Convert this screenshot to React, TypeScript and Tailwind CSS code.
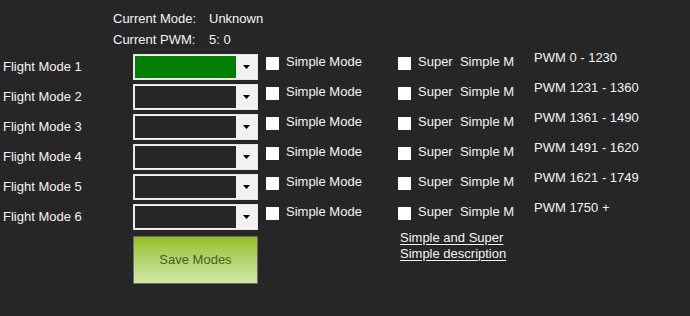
import React from "react";

const modes = [
  { pwm: "PWM 0 - 1230", active: true },
  { pwm: "PWM 1231 - 1360", active: false },
  { pwm: "PWM 1361 - 1490", active: false },
  { pwm: "PWM 1491 - 1620", active: false },
  { pwm: "PWM 1621 - 1749", active: false },
  { pwm: "PWM 1750 +", active: false },
];

function Combo({ active }: { active: boolean }) {
  return (
    <div className="flex w-[125px] h-[26px] border border-[#e4e4e4] bg-[#f2f2f2] p-[1px]">
      <div className={`flex-1 ${active ? "bg-[#008000]" : "bg-[#262626]"}`} />
      <div className="w-[20px] flex items-center justify-center">
        <svg width="7" height="4" viewBox="0 0 7 4">
          <path d="M0 0 H7 L3.5 4 Z" fill="#000" />
        </svg>
      </div>
    </div>
  );
}

function Check({ label, width }: { label: string; width: string }) {
  return (
    <div className={`flex items-start ${width}`}>
      <div className="mt-[3px] w-[13px] h-[13px] bg-white shrink-0" />
      <span className="ml-[7px] leading-[16px] whitespace-pre">{label}</span>
    </div>
  );
}

export default function App() {
  return (
    <main className="w-[690px] h-[316px] bg-[#262626] text-[#f4f4f4] text-[13px] font-['Liberation_Sans',Arial,sans-serif] overflow-hidden">
      {/* Current status */}
      <div className="pt-[11px] pl-[113px]">
        <div className="flex h-[21px] leading-[16px]">
          <span className="w-[96px]">Current Mode:</span>
          <span>Unknown</span>
        </div>
        <div className="flex h-[21px] leading-[16px]">
          <span className="w-[96px]">Current PWM:</span>
          <span>5: 0</span>
        </div>
      </div>

      {/* Mode rows */}
      <div className="mt-px flex flex-col gap-[4px]">
        {modes.map((m, i) => (
          <div key={i} className="flex items-start h-[26px]">
            <div className="w-[133px] h-[26px] pl-[3px] flex items-center leading-[16px]">
              Flight Mode {i + 1}
            </div>
            <Combo active={m.active} />
            <div className="ml-[8px] flex">
              <Check label="Simple Mode" width="w-[132px]" />
              <Check label="Super  Simple M" width="w-[136px]" />
              <span className="-mt-[4px] leading-[16px]">{m.pwm}</span>
            </div>
          </div>
        ))}
      </div>

      {/* Save + description */}
      <div className="flex items-start">
        <button className="ml-[133px] mt-[6px] w-[125px] h-[48px] border border-[#6b6b6b] bg-gradient-to-b from-[#95c11a] to-[#d2e8a4] text-[#4b5e1c] text-[13px]">
          Save Modes
        </button>
        <a className="ml-[142px] leading-[16px] underline underline-offset-[2px] text-[#f4f4f4]">
          Simple and Super
          <br />
          Simple description
        </a>
      </div>
    </main>
  );
}
